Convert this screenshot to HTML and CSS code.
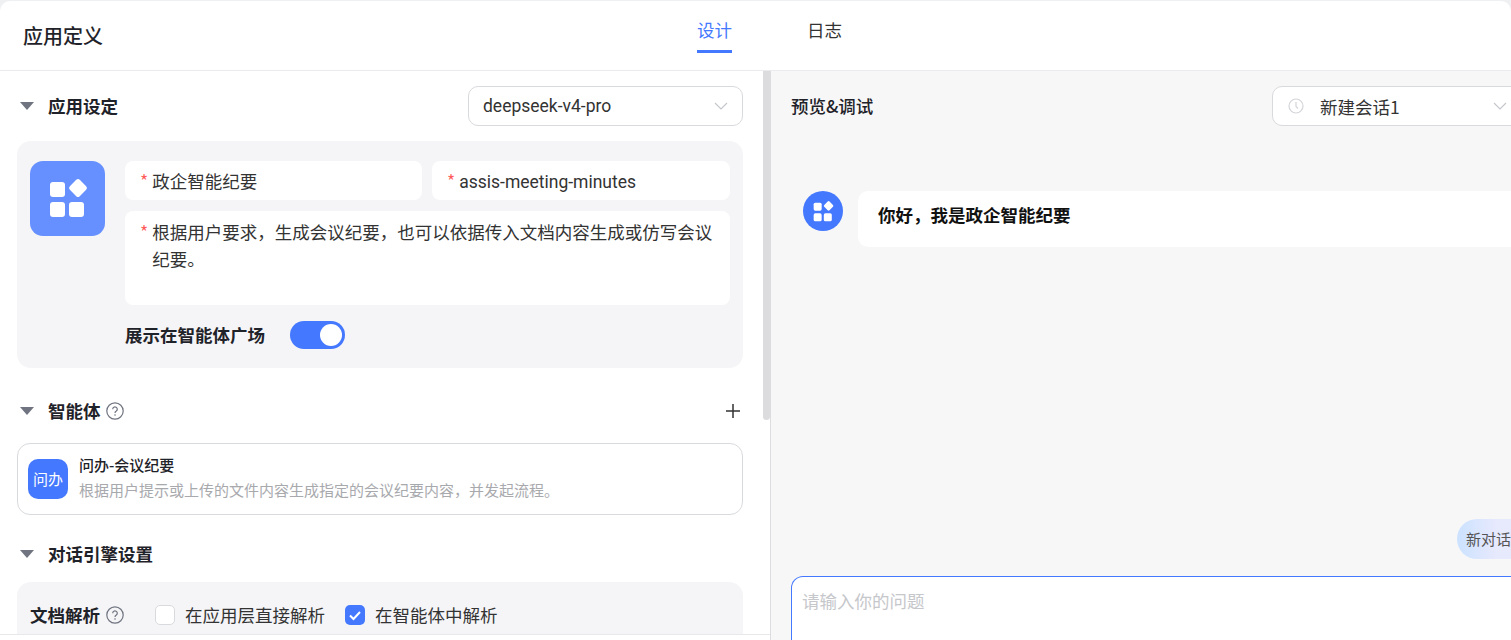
FILE: index.html
```html
<!DOCTYPE html>
<html lang="zh-CN">
<head>
    <meta charset="UTF-8">
    <meta name="viewport" content="width=device-width, initial-scale=1.0">
    <title>应用定义</title>
    <link rel="stylesheet" href="styles.css">
</head>
<body>
    <svg class="defs" width="0" height="0">
        <symbol id="logo" viewBox="0 0 75 75">
            <rect x="20" y="21" width="15" height="15" rx="3" fill="#fff"/>
            <rect x="20" y="41" width="15" height="15" rx="3" fill="#fff"/>
            <rect x="39" y="41" width="15" height="15" rx="3" fill="#fff"/>
            <rect x="41" y="20" width="14" height="14" rx="2.5" fill="#fff" transform="rotate(45 48 27)"/>
        </symbol>
        <symbol id="help" viewBox="0 0 18 18">
            <circle cx="9" cy="9" r="8.2" fill="none" stroke="#6f7480" stroke-width="1.2"/>
            <path d="M6.7 7.2a2.3 2.3 0 1 1 3.6 1.9c-.8.5-1.3 1-1.3 2" fill="none" stroke="#6f7480" stroke-width="1.2"/>
            <circle cx="9" cy="13" r=".8" fill="#6f7480"/>
        </symbol>
        <symbol id="chevron" viewBox="0 0 14 8">
            <path d="M1 1l6 6 6-6" fill="none" stroke="#c4c6cc" stroke-width="1.1"/>
        </symbol>
    </svg>

    <div class="app">
        <div class="top-bar">
            <h1 class="page-title">应用定义</h1>
            <div class="tabs">
                <div class="tab active">设计</div>
                <div class="tab">日志</div>
            </div>
        </div>

        <div class="main">
            <!-- left: settings -->
            <div class="settings">
                <div class="settings-scroll">
                    <div class="section-head first">
                        <span class="caret"></span>
                        <span class="section-title">应用设定</span>
                        <div class="select model-select">
                            <span class="latin">deepseek-v4-pro</span>
                            <svg class="chevron"><use href="#chevron"/></svg>
                        </div>
                    </div>

                    <div class="panel app-info">
                        <div class="app-logo"><svg width="75" height="75"><use href="#logo"/></svg></div>
                        <div class="app-fields">
                            <div class="field-row">
                                <div class="field name-field"><span class="req">*</span>政企智能纪要</div>
                                <div class="field"><span class="req">*</span><span class="latin">assis-meeting-minutes</span></div>
                            </div>
                            <div class="field area">
                                <span class="req">*</span>
                                <span>根据用户要求，生成会议纪要，也可以依据传入文档内容生成或仿写会议纪要。</span>
                            </div>
                            <div class="switch-row">
                                <span class="strong">展示在智能体广场</span>
                                <span class="switch"><span class="knob"></span></span>
                            </div>
                        </div>
                    </div>

                    <div class="section-head agents-head">
                        <span class="caret"></span>
                        <span class="section-title">智能体</span>
                        <svg class="help"><use href="#help"/></svg>
                        <svg class="plus" viewBox="0 0 16 16"><path d="M8 1v14M1 8h14" stroke="#333" stroke-width="1.5"/></svg>
                    </div>

                    <div class="agent-card">
                        <div class="agent-icon">问办</div>
                        <div class="agent-text">
                            <div class="agent-name">问办-会议纪要</div>
                            <div class="agent-desc">根据用户提示或上传的文件内容生成指定的会议纪要内容，并发起流程。</div>
                        </div>
                    </div>

                    <div class="section-head engine-head">
                        <span class="caret"></span>
                        <span class="section-title">对话引擎设置</span>
                    </div>

                    <div class="panel engine">
                        <span class="strong">文档解析</span>
                        <svg class="help"><use href="#help"/></svg>
                        <label class="check first-check"><span class="box"></span>在应用层直接解析</label>
                        <label class="check"><span class="box on"><svg viewBox="0 0 20 20" width="20" height="20"><path d="M5 10.5l3.5 3.5L15 7" fill="none" stroke="#fff" stroke-width="2"/></svg></span>在智能体中解析</label>
                    </div>
                </div>
                <div class="settings-foot"></div>
                <div class="scroll-thumb"></div>
            </div>

            <!-- right: preview -->
            <div class="preview">
                <div class="preview-head">
                    <span class="preview-title">预览&amp;调试</span>
                    <div class="select session-select">
                        <svg class="clock" viewBox="0 0 16 16"><circle cx="8" cy="8" r="7" fill="none" stroke="#d4d5d9" stroke-width="1.2"/><path d="M8 4v4.5l2 2" fill="none" stroke="#d4d5d9" stroke-width="1.2"/></svg>
                        <span class="session-name">新建会话1</span>
                        <svg class="chevron"><use href="#chevron"/></svg>
                    </div>
                </div>
                <div class="chat">
                    <div class="avatar"><svg width="75" height="75" viewBox="0 0 75 75"><use href="#logo"/></svg></div>
                    <div class="bubble">你好，我是政企智能纪要</div>
                </div>
                <div class="new-chat">新对话</div>
                <div class="composer">请输入你的问题</div>
            </div>
        </div>
    </div>
</body>
</html>
```

FILE: styles.css
```css
* {
    margin: 0;
    padding: 0;
    box-sizing: border-box;
    font-family: "Noto Sans CJK SC", "Noto Sans", sans-serif;
}

html,
body {
    height: 100%;
    overflow: hidden;
}

body {
    background: #eff0f2;
    color: #1f2329;
    font-size: 17.5px;
}

.defs {
    display: block;
    height: 0;
}

.latin {
    font-family: Roboto, "Noto Sans CJK SC", sans-serif;
}

.app {
    height: 640px;
    padding-top: 1px;
    display: flex;
    flex-direction: column;
}

/* top bar */
.top-bar {
    height: 69px;
    flex: none;
    background: #fff;
    border-radius: 10px 10px 0 0;
    padding-left: 23px;
    display: flex;
    align-items: center;
}

.page-title {
    width: 674px;
    font-size: 20px;
    font-weight: 500;
    line-height: 70px;
}

.tabs {
    display: flex;
    gap: 75px;
    align-self: flex-start;
}

.tab {
    height: 52px;
    padding-top: 15px;
    font-size: 17.5px;
    line-height: 28px;
    color: #333;
}

.tab.active {
    color: #4478ff;
    border-bottom: 3px solid #4478ff;
}

.main {
    flex: 1;
    min-height: 0;
    overflow: hidden;
    display: flex;
    border-top: 1px solid #ebebee;
}

/* settings column */
.settings {
    flex: 0 0 771px;
    position: relative;
    background: #fff;
    border-right: 1px solid #dcdde1;
    display: flex;
    flex-direction: column;
}

.settings-scroll {
    flex: 1;
    min-height: 0;
    overflow: hidden;
    padding: 15px 27px 0 17px;
}

.settings-foot {
    flex: none;
    height: 6px;
    border-top: 1px solid #e8e8eb;
}

.scroll-thumb {
    position: absolute;
    top: 0;
    right: 0;
    width: 7px;
    height: 349px;
    background: #dcdcde;
    border-radius: 0 0 4px 4px;
}

.section-head {
    height: 40px;
    padding-left: 3px;
    display: flex;
    align-items: center;
}

.agents-head {
    margin-top: 23px;
}

.engine-head {
    margin-top: 19px;
}

.caret {
    width: 0;
    height: 0;
    margin-right: 14px;
    border-left: 7px solid transparent;
    border-right: 7px solid transparent;
    border-top: 8px solid #6f7480;
}

.section-title {
    margin-top: -2px;
}

.section-title,
.strong {
    font-size: 17.5px;
    font-weight: 700;
    color: #1f2329;
}

.model-select {
    margin-left: auto;
    width: 275px;
}

.select {
    height: 40px;
    background: #fff;
    border: 1px solid #d9dadd;
    border-radius: 10px;
    padding: 0 14px;
    display: flex;
    align-items: center;
    justify-content: space-between;
    color: #333;
}

.chevron {
    width: 14px;
    height: 8px;
    flex: none;
}

.panel {
    background: #f5f5f7;
    border-radius: 14px;
}

.app-info {
    margin-top: 15px;
    height: 227px;
    padding: 20px 13px 0;
    display: flex;
    gap: 20px;
}

.app-logo {
    width: 75px;
    height: 75px;
    flex: none;
    background: #6690ff;
    border-radius: 13px;
}

.app-logo svg {
    display: block;
}

.app-fields {
    flex: 1;
    min-width: 0;
}

.field-row {
    display: flex;
    gap: 10px;
}

.field {
    flex: 1;
    height: 39px;
    background: #fff;
    border-radius: 8px;
    padding: 0 15px;
    line-height: 40px;
    color: #333;
}

.name-field {
    flex: 0 0 297px;
}

.req {
    color: #ff5b5b;
    margin-right: 4px;
}

.field.area {
    display: flex;
    height: 94px;
    margin-top: 11px;
    padding-top: 7px;
    line-height: 27px;
}

.switch-row {
    margin-top: 16px;
    display: flex;
    align-items: center;
    gap: 25px;
}

.switch-row .strong {
    margin-top: -1px;
}

.switch {
    width: 55px;
    height: 28px;
    background: #4478ff;
    border-radius: 14px;
    padding: 3px;
    display: flex;
    justify-content: flex-end;
}

.knob {
    width: 22px;
    height: 22px;
    background: #fff;
    border-radius: 50%;
}

.help {
    width: 18px;
    height: 18px;
    margin-left: 5px;
    flex: none;
}

.plus {
    width: 16px;
    height: 16px;
    margin-left: auto;
    margin-right: 2px;
}

.agent-card {
    margin-top: 12px;
    height: 72px;
    border: 1px solid #d9dadd;
    border-radius: 13px;
    padding: 15px 10px;
    display: flex;
    gap: 11px;
}

.agent-icon {
    width: 40px;
    height: 40px;
    flex: none;
    background: #4478ff;
    border-radius: 10px;
    color: #fff;
    font-size: 15px;
    line-height: 40px;
    text-align: center;
}

.agent-name {
    font-size: 15px;
    line-height: 16px;
    margin-top: -2px;
    color: #1f2329;
    font-weight: 500;
}

.agent-desc {
    font-size: 15px;
    line-height: 24px;
    margin-top: 5px;
    color: #a8a9ad;
}

.engine {
    margin-top: 8px;
    height: 52px;
    padding: 21px 13px 0;
    border-radius: 14px 14px 0 0;
    display: flex;
    align-items: flex-start;
    line-height: 24px;
}

.engine .help {
    margin-top: 3px;
    margin-left: 6px;
}

.check {
    display: flex;
    align-items: center;
    margin-left: 20px;
    color: #333;
}

.first-check {
    margin-left: 31px;
}

.box {
    width: 20px;
    height: 20px;
    margin-right: 10px;
    background: #fff;
    border: 1px solid #d9dadd;
    border-radius: 5px;
}

.box.on {
    background: #4478ff;
    border: 0;
}

.box svg {
    display: block;
}

/* preview column */
.preview {
    flex: 0 0 771px;
    min-height: 0;
    overflow: hidden;
    background: #f7f7f7;
    padding: 15px 20px 0;
    display: flex;
    flex-direction: column;
}

.preview-head {
    height: 40px;
    flex: none;
    display: flex;
    align-items: center;
    justify-content: space-between;
}

.preview-title {
    font-weight: 500;
    font-size: 17.5px;
    margin-top: -2px;
}

.session-select {
    width: 250px;
    justify-content: flex-start;
}

.clock {
    width: 16px;
    height: 16px;
    flex: none;
    margin-left: 1px;
}

.session-name {
    margin-left: 16px;
    flex: 1;
}

.chat {
    margin-top: 65px;
    padding-left: 12px;
    display: flex;
    gap: 15px;
}

.avatar {
    width: 40px;
    height: 40px;
    flex: none;
    background: #4478ff;
    border-radius: 50%;
    overflow: hidden;
    display: flex;
    align-items: center;
    justify-content: center;
}

.bubble {
    flex: 1;
    height: 56px;
    background: #fff;
    border-radius: 10px;
    padding: 0 20px;
    font-weight: 700;
    line-height: 48px;
    color: #111;
}

.new-chat {
    align-self: flex-end;
    margin-top: 272px;
    width: 65px;
    height: 40px;
    flex: none;
    padding-left: 9px;
    border-radius: 20px 0 0 20px;
    background: linear-gradient(90deg, #cbe2ff 0%, #e7e9fd 60%);
    font-size: 15px;
    line-height: 40px;
    color: #555;
    white-space: nowrap;
    overflow: hidden;
}

.composer {
    margin-top: 17px;
    flex: 1;
    min-height: 0;
    background: #fff;
    border: 1px solid #4478ff;
    border-bottom: 0;
    border-radius: 12px 12px 0 0;
    padding: 10px 11px 0 10px;
    line-height: 28px;
    color: #c6c7cb;
}
```
